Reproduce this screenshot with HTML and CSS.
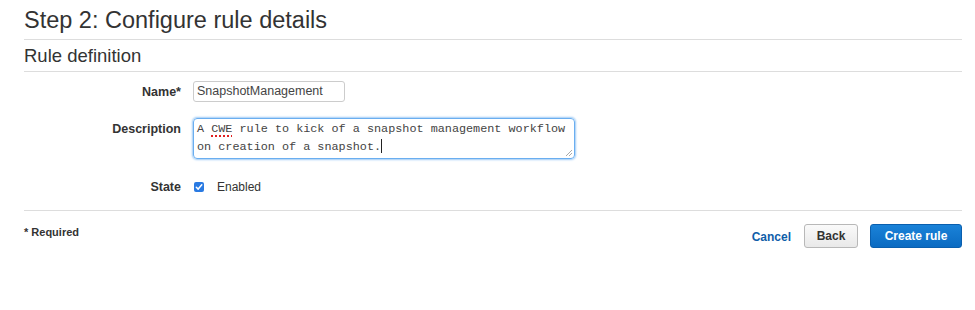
FILE: index.html
```html
<!DOCTYPE html>
<html>
<head>
<meta charset="utf-8">
<link rel="stylesheet" href="styles.css">
</head>
<body>
<div class="page">
  <h1 class="title">Step 2: Configure rule details</h1>
  <h2 class="section">Rule definition</h2>
  <div class="form">
    <div class="row row-name">
      <label class="label">Name*</label>
      <div class="input">SnapshotManagement</div>
    </div>
    <div class="row row-desc">
      <label class="label">Description</label>
      <div class="textarea"><div class="line">A <span class="sp">CWE</span> rule to kick of a snapshot management workflow</div><div class="line">on creation of a snapshot.<span class="caret"></span></div><svg class="grip" width="10" height="10" viewBox="0 0 10 10"><path d="M9 3 L3 9 M9 6 L6 9" stroke="#aaa" stroke-width="1"/></svg></div>
    </div>
    <div class="row row-state">
      <label class="label">State</label>
      <span class="check"><svg width="10" height="10" viewBox="0 0 10 10"><path d="M2.3 5.2 L4.2 7.1 L7.8 2.8" fill="none" stroke="#fff" stroke-width="1.5" stroke-linecap="round" stroke-linejoin="round"/></svg></span>
      <span class="enabled">Enabled</span>
    </div>
  </div>
  <div class="footer">
    <div class="required">* Required</div>
    <div class="actions">
      <a class="cancel">Cancel</a>
      <button class="btn back">Back</button>
      <button class="btn primary">Create rule</button>
    </div>
  </div>
</div>
</body>
</html>
```

FILE: styles.css
```css
* { box-sizing: border-box; }
html, body { margin: 0; padding: 0; background: #fff; }
body { font-family: "Liberation Sans", Arial, sans-serif; color: #444; }
.page { padding: 0 13px 0 24px; }
.title {
  margin: 0;
  font-weight: normal;
  font-size: 23.5px;
  line-height: 24px;
  padding-top: 8px;
  height: 40px;
  color: #333;
  border-bottom: 1px solid #ddd;
}
.section {
  margin: 0;
  font-weight: normal;
  font-size: 18.5px;
  line-height: 20px;
  padding-top: 6px;
  height: 32px;
  color: #333;
  border-bottom: 1px solid #ddd;
}
.form { padding-top: 9px; height: 139px; border-bottom: 1px solid #ddd; }
.row { display: flex; align-items: flex-start; }
.label {
  width: 157px;
  text-align: right;
  font-weight: bold;
  font-size: 12.5px;
  color: #333;
  margin-right: 12px;
}
.row-name .label { padding-top: 4px; }
.input {
  width: 152px;
  height: 21px;
  border: 1px solid #ccc;
  border-radius: 3px;
  font-size: 12.5px;
  line-height: 19px;
  padding-left: 3px;
  color: #444;
}
.row-desc { margin-top: 16px; }
.row-desc .label { padding-top: 4px; }
.textarea {
  position: relative;
  width: 382px;
  height: 41px;
  border: 1px solid #6aaef0;
  box-shadow: 0 0 2px 1px #9fcbf5;
  border-radius: 4px;
  font-family: "Liberation Mono", "Courier New", monospace;
  font-size: 11.8px;
  line-height: 18px;
  padding: 1px 0 0 3px;
  color: #444;
  white-space: pre;
}
.sp {
  text-decoration: underline dotted #e02020;
  text-decoration-thickness: 2px;
  text-underline-offset: 3px;
}
.caret {
  display: inline-block;
  width: 1px;
  height: 14px;
  background: #222;
  vertical-align: -3px;
}
.grip { position: absolute; right: 1px; bottom: 1px; }
.row-state { margin-top: 21px; align-items: center; }
.row-state .label { margin-right: 13px; }
.check {
  width: 10px; height: 10px;
  background: #2a7ae2;
  border-radius: 2px;
  display: inline-flex;
}
.enabled { margin-left: 13px; font-size: 12px; color: #333; }
.footer { display: flex; justify-content: space-between; padding-top: 13px; }
.required { font-size: 11px; font-weight: bold; color: #333; margin-top: 2px; }
.actions { display: flex; align-items: center; }
.cancel { color: #0f5ea9; font-weight: bold; font-size: 12px; margin-right: 13px; margin-top: 2px; }
.btn {
  font-family: "Liberation Sans", Arial, sans-serif;
  font-weight: bold;
  font-size: 12px;
  height: 24px;
  border-radius: 3px;
  padding: 0;
}
.back {
  width: 54px;
  background: linear-gradient(#fafafa, #e9e9e9);
  border: 1px solid #b8b8b8;
  color: #333;
  margin-right: 12px;
}
.primary {
  width: 92px;
  background: linear-gradient(#1a82d8, #0b6bc2);
  border: 1px solid #0a5fae;
  color: #fff;
}
```
